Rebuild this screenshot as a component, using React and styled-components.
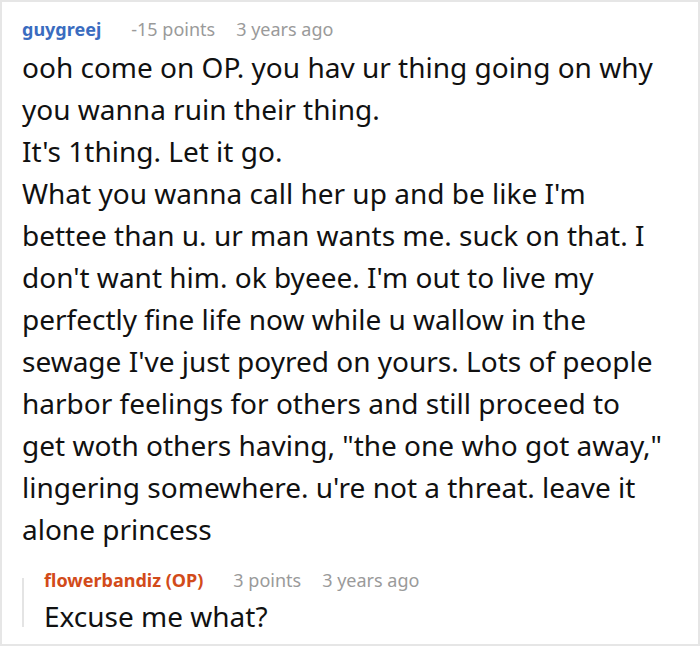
import styled, { createGlobalStyle } from 'styled-components';

const GlobalStyle = createGlobalStyle`
  html, body {
    margin: 0;
    padding: 0;
    background: #ffffff;
  }
  body {
    font-family: "Noto Sans", "Open Sans", sans-serif;
  }
`

const Frame = styled.div`
  box-sizing: border-box;
  width: 700px;
  height: 646px;
  border: 2px solid #e6e6e6;
  background: #ffffff;
  padding: 14px 8px 0 20px;
  overflow: hidden;
`

const Comment = styled.div`
  display: flex;
  flex-direction: column;
`

const Meta = styled.div`
  display: flex;
  align-items: baseline;
  gap: 21px;
  font-size: 18px;
  line-height: 26px;
  white-space: nowrap;
`

const Author = styled.span`
  font-weight: 700;
  color: ${p => p.$op ? '#d24b1a' : '#3a6cc0'};
  margin-right: 9px;
`

const Info = styled.span`
  color: #9a9a9a;
`

const Body = styled.p`
  margin: ${p => p.$tight ? '2px' : '4px'} 0 0 0;
  font-size: 28px;
  line-height: 42px;
  color: #111111;
`

const Line = styled.span`
  display: block;
  white-space: nowrap;
`

const Reply = styled.div`
  display: flex;
  margin-top: 28px;
  border-left: 2px solid #e4e4e4;
  padding-left: 20px;
`

const ReplyInner = styled(Comment)`
  margin: -11px 0 -10px 0;
`

const lines = [
  'ooh come on OP. you hav ur thing going on why',
  'you wanna ruin their thing.',
  "It's 1thing. Let it go.",
  "What you wanna call her up and be like I'm",
  'bettee than u. ur man wants me. suck on that. I',
  "don't want him. ok byeee. I'm out to live my",
  'perfectly fine life now while u wallow in the',
  "sewage I've just poyred on yours. Lots of people",
  'harbor feelings for others and still proceed to',
  'get woth others having, "the one who got away,"',
  "lingering somewhere. u're not a threat. leave it",
  'alone princess',
]

const App = () => (
  <>
    <GlobalStyle />
    <Frame>
      <Comment>
        <Meta>
          <Author>guygreej</Author>
          <Info>-15 points</Info>
          <Info>3 years ago</Info>
        </Meta>
        <Body>
          {lines.map((l, i) => <Line key={i}>{l}</Line>)}
        </Body>
        <Reply>
          <ReplyInner>
            <Meta>
              <Author $op>flowerbandiz (OP)</Author>
              <Info>3 points</Info>
              <Info>3 years ago</Info>
            </Meta>
            <Body $tight>Excuse me what?</Body>
          </ReplyInner>
        </Reply>
      </Comment>
    </Frame>
  </>
)

export default App
